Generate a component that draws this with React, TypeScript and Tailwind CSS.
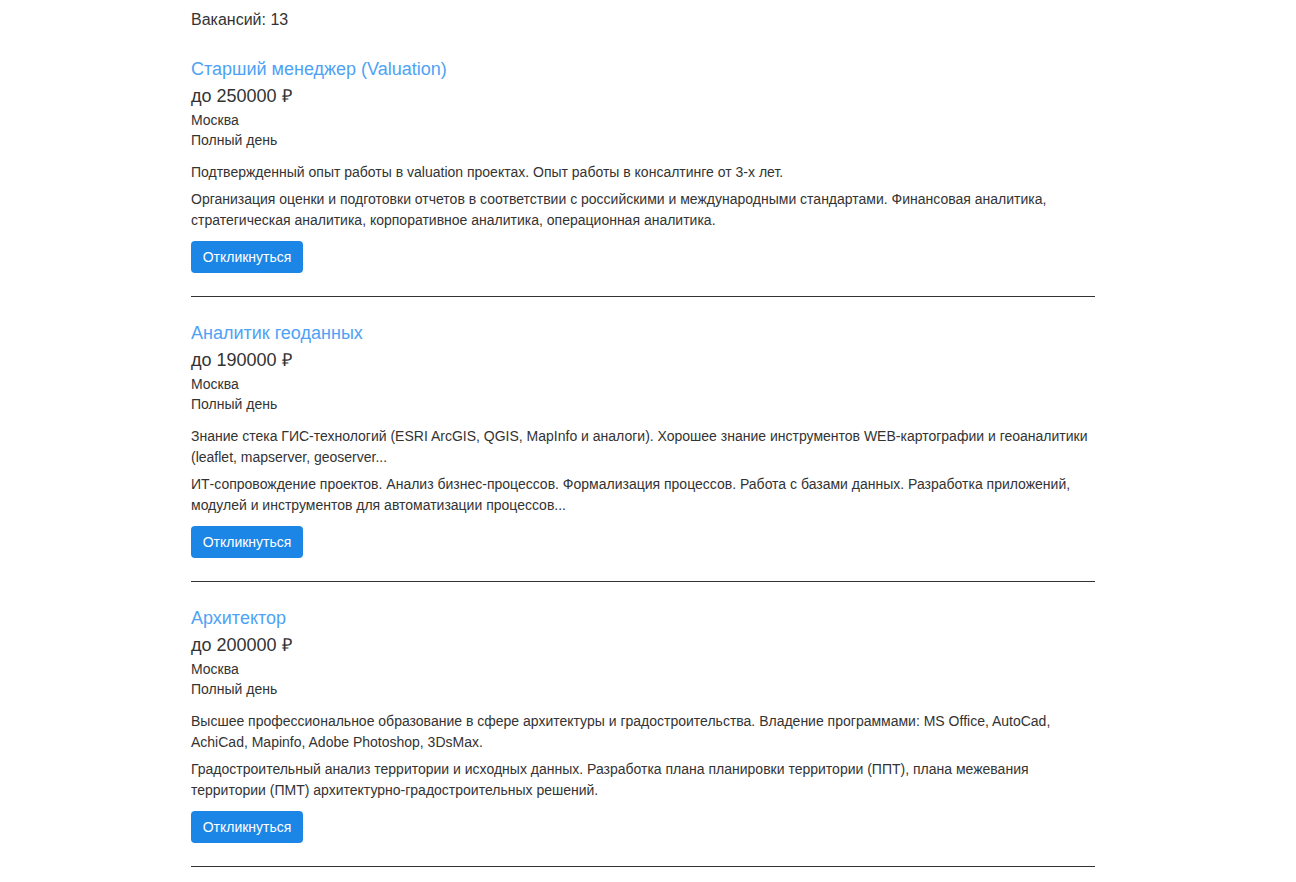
const vacancies = [
  {
    title: 'Старший менеджер (Valuation)',
    salary: 'до 250000 ₽',
    city: 'Москва',
    schedule: 'Полный день',
    requirement: 'Подтвержденный опыт работы в valuation проектах. Опыт работы в консалтинге от 3-х лет.',
    duties:
      'Организация оценки и подготовки отчетов в соответствии с российскими и международными стандартами. Финансовая аналитика, стратегическая аналитика, корпоративное аналитика, операционная аналитика.',
  },
  {
    title: 'Аналитик геоданных',
    salary: 'до 190000 ₽',
    city: 'Москва',
    schedule: 'Полный день',
    requirement:
      'Знание стека ГИС-технологий (ESRI ArcGIS, QGIS, MapInfo и аналоги). Хорошее знание инструментов WEB-картографии и геоаналитики (leaflet, mapserver, geoserver...',
    duties:
      'ИТ-сопровождение проектов. Анализ бизнес-процессов. Формализация процессов. Работа с базами данных. Разработка приложений, модулей и инструментов для автоматизации процессов...',
  },
  {
    title: 'Архитектор',
    salary: 'до 200000 ₽',
    city: 'Москва',
    schedule: 'Полный день',
    requirement:
      'Высшее профессиональное образование в сфере архитектуры и градостроительства. Владение программами: MS Office, AutoCad, AchiCad, Mapinfo, Adobe Photoshop, 3DsMax.',
    duties:
      'Градостроительный анализ территории и исходных данных. Разработка плана планировки территории (ППТ), плана межевания территории (ПМТ) архитектурно-градостроительных решений.',
  },
];

export default function App() {
  return (
    <div className="min-h-screen bg-white font-['Liberation_Sans',Arial,sans-serif] text-[#333]">
      <div className="ml-[191px] w-[904px] pt-[8px]">
        <div className="text-[16px] leading-[24px]">Вакансий: 13</div>

        <div className="mt-[25px]">
          {vacancies.map((v, i) => (
            <div key={i}>
              <a href="#" className="block text-[18px] leading-[24px] text-[#4ea2f5]">
                {v.title}
              </a>
              <div className="mt-[3px] text-[18px] leading-[24px]">{v.salary}</div>
              <div className="mt-[2px] text-[14px] leading-[20px]">{v.city}</div>
              <div className="text-[14px] leading-[20px]">{v.schedule}</div>
              <p className="mt-[12px] text-[14px] leading-[21px]">{v.requirement}</p>
              <p className="mt-[6px] text-[14px] leading-[21px]">{v.duties}</p>
              <button className="mt-[10px] h-[32px] w-[112px] rounded-[4px] bg-[#1b86e6] text-[14px] text-white">
                Откликнуться
              </button>
              <hr className="mt-[23px] mb-[24px] border-0 border-t border-[#333]" />
            </div>
          ))}
        </div>
      </div>
    </div>
  );
}
